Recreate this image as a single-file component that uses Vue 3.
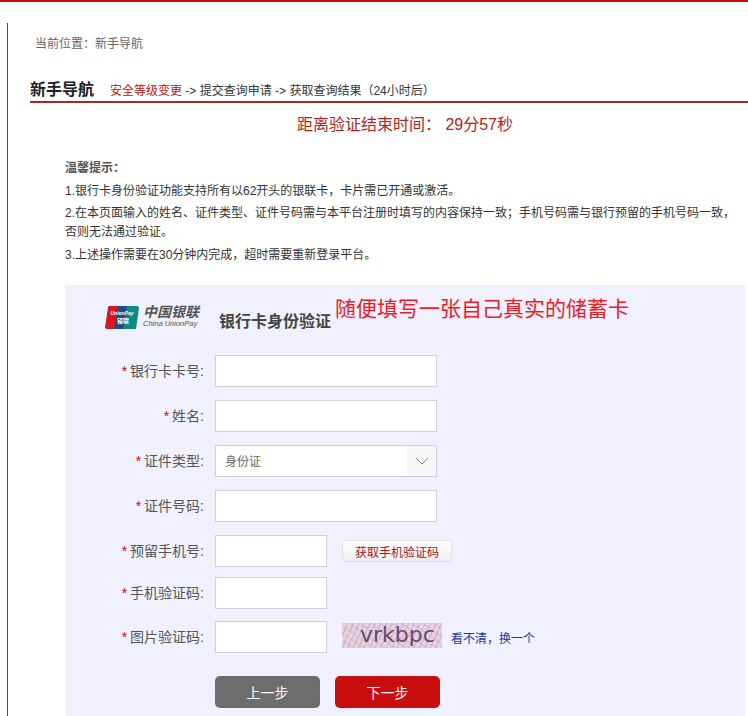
<script setup>
const rows = [
  { label: '银行卡卡号:', type: 'long' },
  { label: '姓名:', type: 'long' },
  { label: '证件类型:', type: 'select' },
  { label: '证件号码:', type: 'long' },
  { label: '预留手机号:', type: 'sms' },
  { label: '手机验证码:', type: 'short' },
  { label: '图片验证码:', type: 'captcha' }
]
</script>

<template>
  <div class="page">
    <div class="main">
      <div class="crumb">当前位置&#xFF1A;新手导航</div>
      <div class="heading">
        <h1>新手导航</h1>
        <div class="steps"><span class="current">安全等级变更</span> -&gt; 提交查询申请 -&gt; 获取查询结果&#xFF08;24小时后&#xFF09;</div>
      </div>
      <div class="timer">距离验证结束时间&#xFF1A; <span class="left">29分57秒</span></div>
      <div class="tips">
        <p class="tips-title">温馨提示&#xFF1A;</p>
        <p>1.银行卡身份验证功能支持所有以62开头的银联卡&#xFF0C;卡片需已开通或激活。</p>
        <p>2.在本页面输入的姓名、证件类型、证件号码需与本平台注册时填写的内容保持一致&#xFF1B;手机号码需与银行预留的手机号码一致&#xFF0C;否则无法通过验证。</p>
        <p>3.上述操作需要在30分钟内完成&#xFF0C;超时需要重新登录平台。</p>
      </div>
      <div class="panel">
        <div class="panel-head">
          <div class="logo">
            <svg width="34" height="23" viewBox="0 0 34 23">
              <path d="M6 0h10L12 23H2a2 2 0 0 1-2-2L3 2a2 2 0 0 1 3-2z" fill="#d7171f" />
              <path d="M13 0h11l-4 23H9z" fill="#1a4c8f" />
              <path d="M22 0h10a2 2 0 0 1 2 2l-3 21H18z" fill="#0d8a85" />
              <text x="17" y="9" class="logo-en" text-anchor="middle">UnionPay</text>
              <text x="18" y="17" class="logo-cn" text-anchor="middle">银联</text>
            </svg>
            <div class="logo-text">
              <span class="logo-zh">中国银联</span>
              <span class="logo-sub">China UnionPay</span>
            </div>
          </div>
          <span class="panel-title">银行卡身份验证</span>
          <span class="note">随便填写一张自己真实的储蓄卡</span>
        </div>
        <div v-for="row in rows" :key="row.label" class="row" :class="'row-' + row.type">
          <label class="label"><i>*</i>{{ row.label }}</label>
          <div v-if="row.type === 'select'" class="select">
            <span class="select-value">身份证</span>
            <span class="arrow">
              <svg width="14" height="8" viewBox="0 0 14 8"><path d="M1 1l6 6 6-6" fill="none" stroke="#8a8a8a" /></svg>
            </span>
          </div>
          <div v-else class="input" :class="{ short: row.type !== 'long' }"></div>
          <button v-if="row.type === 'sms'" class="sms">获取手机验证码</button>
          <template v-if="row.type === 'captcha'">
            <div class="captcha">vrkbpc</div>
            <a class="refresh">看不清&#xFF0C;换一个</a>
          </template>
        </div>
        <div class="actions">
          <button class="btn prev">上一步</button>
          <button class="btn next">下一步</button>
        </div>
      </div>
    </div>
  </div>
</template>

<style scoped>
.page {
  width: 748px;
  height: 716px;
  box-sizing: border-box;
  overflow: hidden;
  border-top: 2px solid #c40f0b;
  padding: 21px 0 0 7px;
  background: #fff;
  font-family: "Liberation Sans", "Noto Sans CJK SC", sans-serif;
  color: #333;
}
.main {
  height: 693px;
  border-left: 1px solid #a8282c;
  padding-left: 22px;
  overflow: hidden;
}
.crumb {
  padding: 9px 0 0 5px;
  height: 25px;
  line-height: 25px;
  font-size: 12px;
  color: #666;
}
.heading {
  margin-top: 13px;
  height: 31px;
  display: flex;
  align-items: flex-end;
  border-bottom: 2px solid #a8282c;
  box-sizing: content-box;
}
h1 {
  margin: 0 16px 0 0;
  font-size: 16px;
  line-height: 22px;
  font-weight: bold;
  color: #222;
}
.steps {
  font-size: 12px;
  line-height: 20px;
  color: #333;
}
.current { color: #c40f0b; }
.timer {
  margin-top: 10px;
  padding-left: 32px;
  height: 24px;
  line-height: 24px;
  text-align: center;
  font-size: 16px;
  color: #b22222;
}
.tips {
  margin: 22px 0 0 35px;
  width: 680px;
  font-size: 12px;
  line-height: 19px;
  color: #333;
}
.tips p { margin: 0 0 3.5px; }
.tips-title { font-weight: bold; color: #555; }
.panel {
  margin: 20.5px 0 0 35px;
  width: 680px;
  height: 440px;
  background: #f0f0fe;
}
.panel-head {
  height: 70px;
  display: flex;
  align-items: flex-start;
}
.logo {
  margin: 20px 0 0 40px;
  display: flex;
  align-items: center;
  gap: 4px;
  width: 114px;
}
.logo-en { font: italic bold 5px "Liberation Sans", sans-serif; fill: #fff; }
.logo-cn { font: bold 6px "Noto Sans CJK SC", sans-serif; fill: #fff; }
.logo-text { display: flex; flex-direction: column; color: #4a4a4a; }
.logo-zh {
  font-size: 14px;
  line-height: 14px;
  font-style: italic;
  font-weight: bold;
  color: #555;
}
.logo-sub {
  font-size: 7.5px;
  line-height: 10px;
  font-style: italic;
  color: #555;
  white-space: nowrap;
}
.panel-title {
  margin-top: 26px;
  font-size: 16px;
  line-height: 22px;
  font-weight: bold;
  color: #444;
  white-space: nowrap;
}
.note {
  margin: 9px 0 0 4px;
  font-size: 21px;
  line-height: 30px;
  color: #ed1c24;
  white-space: nowrap;
}
.row {
  display: flex;
  align-items: center;
  height: 32px;
  margin-bottom: 13px;
}
.row-sms { margin-bottom: 10px; }
.row-short { margin-bottom: 12px; }
.row-captcha { margin-bottom: 23px; }
.label {
  width: 139px;
  margin-right: 11px;
  padding-bottom: 2px;
  flex: none;
  text-align: right;
  font-size: 14px;
  color: #555;
}
.label i { font-style: normal; color: #c40f0b; margin-right: 3px; }
.input {
  width: 222px;
  height: 32px;
  box-sizing: border-box;
  background: #fff;
  border: 1px solid #cfcfdf;
}
.input.short { width: 112px; }
.select {
  width: 222px;
  height: 32px;
  box-sizing: border-box;
  background: #fff;
  border: 1px solid #cfcfdf;
  padding-left: 9px;
  display: flex;
  align-items: center;
  justify-content: space-between;
  font-size: 12px;
  color: #666;
}
.select-value { padding-bottom: 2px; }
.arrow {
  width: 29px;
  height: 30px;
  background: #f6f6f8;
  display: flex;
  align-items: center;
  justify-content: center;
}
.sms {
  margin-left: 15px;
  width: 110px;
  height: 22px;
  padding: 0;
  border: 1px solid #e2e2e2;
  border-radius: 3px;
  background: linear-gradient(#fff, #eeeeee);
  font: 12px "Liberation Sans", "Noto Sans CJK SC", sans-serif;
  color: #a31515;
}
.captcha {
  margin: -3px 0 0 15px;
  width: 100px;
  height: 25px;
  box-sizing: border-box;
  padding-left: 18px;
  background:
    repeating-linear-gradient(115deg, rgba(150, 150, 130, .4) 0 1px, transparent 1px 5px),
    repeating-linear-gradient(35deg, rgba(170, 170, 150, .35) 0 1px, transparent 1px 6px),
    #e8cfe4;
  font: 22px/24px "DejaVu Sans", sans-serif;
  color: #6a4a70;
}
.refresh {
  margin-left: 9px;
  font-size: 12px;
  color: #1a3a9c;
}
.actions {
  display: flex;
  gap: 15px;
  padding-left: 150px;
}
.btn {
  width: 105px;
  height: 32px;
  padding: 0;
  border: 0;
  border-radius: 5px;
  color: #fff;
  font: 14px "Liberation Sans", "Noto Sans CJK SC", sans-serif;
}
.prev { background: #6d6d6d; }
.next { background: #c80e0e; }
</style>
